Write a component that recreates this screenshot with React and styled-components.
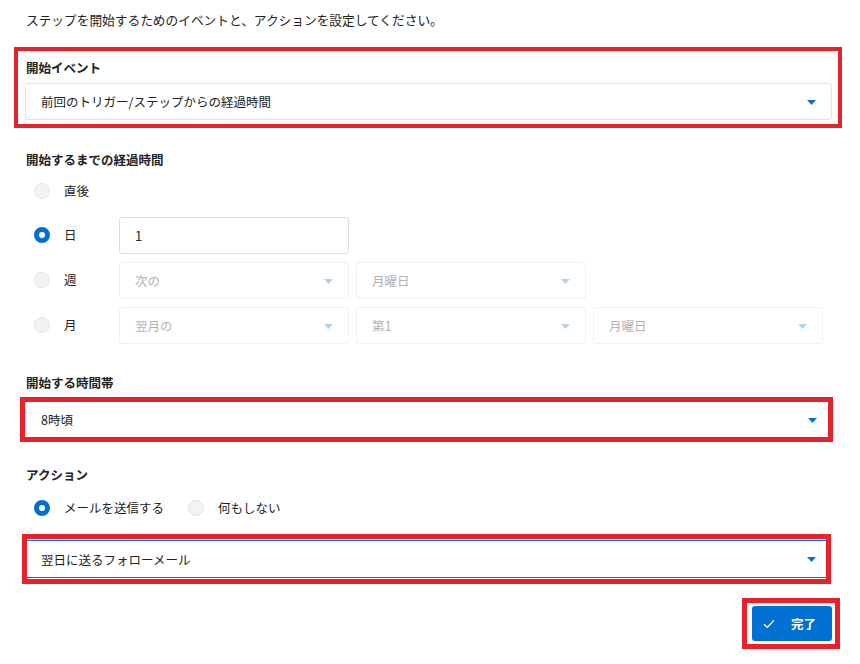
import styled, { createGlobalStyle } from 'styled-components';

const Global = createGlobalStyle`
    html, body {
        margin: 0;
        padding: 0;
        background: #ffffff;
    }
    body {
        font-family: "Noto Sans CJK JP", "Noto Sans", sans-serif;
        color: #222222;
        font-size: 12.5px;
    }
`;

const BLUE = '#0070d2';
const RED = '#e8222a';

function Arrow({ disabled }) {
    return (
        <svg width="9" height="5" viewBox="0 0 9 5">
            <path d="M0 0 L9 0 L4.5 5 Z" fill={disabled ? '#acd3f1' : BLUE} />
        </svg>
    );
}

function Check() {
    return (
        <svg width="12" height="10" viewBox="0 0 12 10">
            <path d="M1 5.2 L4.3 8.4 L11 1.2" fill="none" stroke="#ffffff" strokeWidth="1.3" />
        </svg>
    );
}

function Select({ value, disabled, variant }) {
    return (
        <SelectBox $disabled={disabled} $variant={variant}>
            <span>{value}</span>
            <Arrow disabled={disabled} />
        </SelectBox>
    );
}

function Radio({ checked, label }) {
    return (
        <RadioLabel>
            <RadioDot $checked={checked} />
            <span>{label}</span>
        </RadioLabel>
    );
}

export default function App() {
    return (
        <>
            <Global />
            <Page>
                <Intro>ステップを開始するためのイベントと、アクションを設定してください。</Intro>

                <EventBox>
                    <Label>開始イベント</Label>
                    <Select value="前回のトリガー/ステップからの経過時間" />
                </EventBox>

                <Section $top={23}>
                    <Label>開始するまでの経過時間</Label>
                    <Options>
                        <OptionRow $short>
                            <Radio label="直後" />
                        </OptionRow>
                        <OptionRow>
                            <Radio checked label="日" />
                            <TextInput>1</TextInput>
                        </OptionRow>
                        <OptionRow>
                            <Radio label="週" />
                            <Select disabled value="次の" />
                            <Select disabled value="月曜日" />
                        </OptionRow>
                        <OptionRow>
                            <Radio label="月" />
                            <Select disabled value="翌月の" />
                            <Select disabled value="第1" />
                            <Select disabled value="月曜日" />
                        </OptionRow>
                    </Options>
                </Section>

                <Section $top={30}>
                    <Label>開始する時間帯</Label>
                    <TimeBox>
                        <Select variant="plain" value="8時頃" />
                    </TimeBox>
                </Section>

                <Section $top={24}>
                    <Label>アクション</Label>
                    <ActionRadios>
                        <Radio checked label="メールを送信する" />
                        <Radio label="何もしない" />
                    </ActionRadios>
                    <MailBox>
                        <Select variant="focus" value="翌日に送るフォローメール" />
                    </MailBox>
                </Section>

                <Footer>
                    <ButtonBox>
                        <DoneButton>
                            <Check />
                            <span>完了</span>
                        </DoneButton>
                    </ButtonBox>
                </Footer>
            </Page>
        </>
    );
}

// styled components
const Page = styled.main`
    box-sizing: border-box;
    width: 860px;
    padding: 11px 28px 20px 25px;
    display: flex;
    flex-direction: column;
`;

const Intro = styled.div`
    font-size: 12.7px;
    line-height: 18px;
    padding-left: 1px;
    margin-bottom: 18px;
`;

const Label = styled.div`
    font-weight: 700;
    line-height: 18px;
    padding-left: 1px;
`;

const EventBox = styled.div`
    border: 4px solid ${RED};
    margin: 0 -10px 0 -11px;
    padding: 8px 6px 4px 7px;
    display: flex;
    flex-direction: column;
    gap: 6px;
`;

const Section = styled.section`
    margin-top: ${p => p.$top}px;
    display: flex;
    flex-direction: column;
`;

const Options = styled.div`
    margin-top: 5px;
    display: flex;
    flex-direction: column;
    gap: 8px;
`;

const OptionRow = styled.div`
    display: grid;
    grid-template-columns: 87px 230px 230px 230px;
    column-gap: 7px;
    align-items: center;
    height: ${p => (p.$short ? 35 : 37)}px;
`;

const RadioLabel = styled.label`
    display: flex;
    align-items: center;
    gap: 14px;
    padding-left: 9px;
    line-height: 18px;
    margin-top: -2px;
`;

const RadioDot = styled.span`
    box-sizing: border-box;
    width: 16px;
    height: 16px;
    border-radius: 50%;
    flex: none;
    background: ${p => (p.$checked ? '#ffffff' : '#f3f3f3')};
    border: ${p => (p.$checked ? `5px solid ${BLUE}` : '1px solid #e4e4e4')};
`;

const TextInput = styled.div`
    box-sizing: border-box;
    height: 37px;
    border: 1px solid #dddddd;
    border-radius: 3px;
    padding-left: 15px;
    display: flex;
    align-items: center;
    font-size: 13px;
`;

const SelectBox = styled.div`
    box-sizing: border-box;
    height: ${p => (p.$variant === 'plain' ? 35 : p.$variant === 'focus' ? 38 : 37)}px;
    display: flex;
    align-items: center;
    justify-content: space-between;
    background: #ffffff;
    color: ${p => (p.$disabled ? '#b3b3b3' : '#222222')};
    border-radius: ${p => (p.$variant ? 0 : 3)}px;
    border: ${p =>
        p.$variant === 'plain' ? 'none' : p.$disabled ? '1px solid #f0f0f0' : '1px solid #e3e3e3'};
    ${p => p.$variant === 'focus' && `
        border: none;
        border-top: 1px solid ${BLUE};
        border-bottom: 1px solid ${BLUE};
    `}
    padding: ${p =>
        p.$variant === 'plain' ? '0 11px 0 16px' : p.$variant === 'focus' ? '0 10px 0 14px' : '0 15px 0 15px'};
    svg {
        flex: none;
        margin-top: 1px;
    }
`;

const TimeBox = styled.div`
    margin: 5px -1px 0 -5px;
    border: 5px solid ${RED};
`;

const ActionRadios = styled.div`
    margin-top: 14px;
    height: 20px;
    display: flex;
    align-items: center;
    gap: 24px;
    label {
        margin-top: 0;
    }
    label + label {
        padding-left: 0;
    }
`;

const MailBox = styled.div`
    margin: 16px 1px 0 -3px;
    border: 5px solid ${RED};
    padding: 1px 0;
`;

const Footer = styled.div`
    margin-top: 14px;
    display: flex;
    justify-content: flex-end;
    margin-right: -8px;
`;

const ButtonBox = styled.div`
    border: 5px solid ${RED};
    padding: 3px 3px 3px 5px;
`;

const DoneButton = styled.button`
    box-sizing: border-box;
    width: 80px;
    height: 35px;
    border: none;
    border-radius: 3px;
    background: ${BLUE};
    color: #ffffff;
    font-family: inherit;
    font-size: 12.5px;
    font-weight: 700;
    display: flex;
    align-items: center;
    gap: 16px;
    padding: 0 0 0 11px;
    cursor: pointer;
`;
